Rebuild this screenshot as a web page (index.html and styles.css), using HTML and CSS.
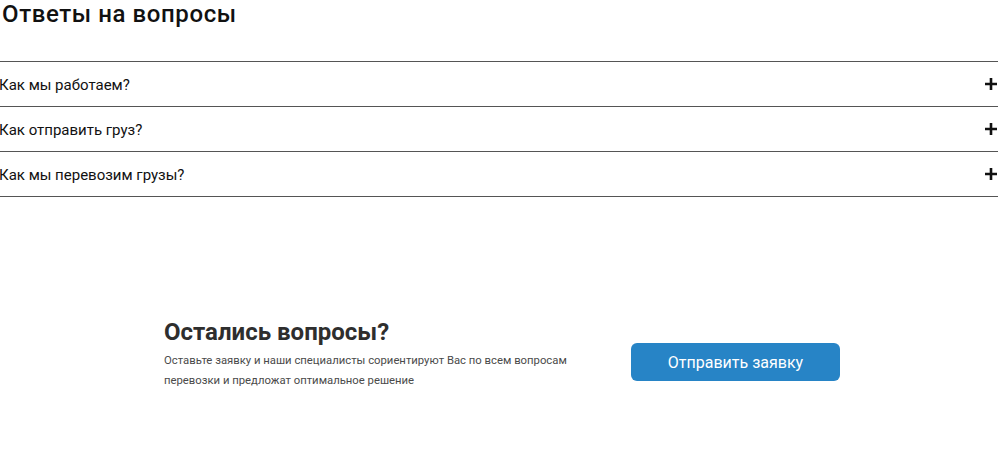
FILE: index.html
```html
<!DOCTYPE html>
<html lang="ru">
<head>
<meta charset="utf-8">
<title>Ответы на вопросы</title>
<link rel="stylesheet" href="styles.css">
</head>
<body>
<section class="faq">
  <h2 class="faq-title">Ответы на вопросы</h2>
  <ul class="faq-list">
    <li class="faq-item">
      <span class="faq-q">Как мы работаем?</span>
      <svg class="faq-plus" width="14" height="14" viewBox="0 0 14 14"><path d="M7 1v12M1 7h12" stroke="#111" stroke-width="2.6" fill="none"/></svg>
    </li>
    <li class="faq-item">
      <span class="faq-q">Как отправить груз?</span>
      <svg class="faq-plus" width="14" height="14" viewBox="0 0 14 14"><path d="M7 1v12M1 7h12" stroke="#111" stroke-width="2.6" fill="none"/></svg>
    </li>
    <li class="faq-item">
      <span class="faq-q">Как мы перевозим грузы?</span>
      <svg class="faq-plus" width="14" height="14" viewBox="0 0 14 14"><path d="M7 1v12M1 7h12" stroke="#111" stroke-width="2.6" fill="none"/></svg>
    </li>
  </ul>
</section>
<section class="cta">
  <div class="cta-inner">
    <div class="cta-text">
      <h3 class="cta-title">Остались вопросы?</h3>
      <p class="cta-desc">Оставьте заявку и наши специалисты сориентируют Вас по всем вопросам перевозки и предложат оптимальное решение</p>
    </div>
    <button class="cta-btn" type="button">Отправить заявку</button>
  </div>
</section>
</body>
</html>
```
FILE: styles.css
```css
* { box-sizing: border-box; }
html, body { margin: 0; padding: 0; background: #fff; }
body { font-family: Roboto, "Noto Sans", Arial, sans-serif; color: #111; }

.faq { padding: 0; }
.faq-title {
  margin: 0;
  padding-left: 2px;
  font-size: 24px;
  line-height: 28px;
  font-weight: 500;
  letter-spacing: 0.6px;
  color: #111;
}
.faq-list {
  list-style: none;
  margin: 33px 0 0;
  padding: 0;
  border-top: 1px solid #555;
}
.faq-item {
  display: flex;
  align-items: center;
  justify-content: space-between;
  height: 45px;
  border-bottom: 1px solid #555;
  padding-right: 0;
}
.faq-q {
  font-size: 15px;
  line-height: 20px;
  color: #111;
  margin-left: -1px;
  padding-top: 1px;
}
.faq-plus { display: block; flex: none; }

.cta { padding-top: 121px; }
.cta-inner {
  width: 682px;
  margin: 0 auto;
  padding-left: 6px;
  display: flex;
  justify-content: space-between;
  align-items: flex-start;
}
.cta-text { width: 430px; }
.cta-title {
  margin: 0;
  font-size: 24px;
  line-height: 28px;
  font-weight: 700;
  color: #2e2e2e;
}
.cta-desc {
  margin: 5px 0 0;
  font-size: 11.3px;
  line-height: 20px;
  color: #4a4a4a;
}
.cta-btn {
  margin-top: 25px;
  width: 209px;
  height: 38px;
  border: none;
  border-radius: 6px;
  background: #2784c6;
  color: #fff;
  font-family: Roboto, "Noto Sans", Arial, sans-serif;
  font-size: 16px;
  cursor: pointer;
}
```
